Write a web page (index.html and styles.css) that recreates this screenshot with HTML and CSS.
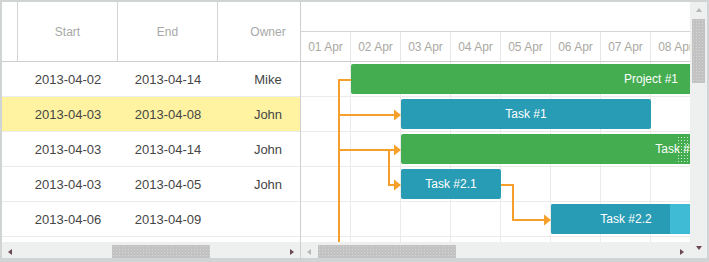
FILE: index.html
```html
<!DOCTYPE html>
<html lang="en">
  <head>
    <meta charset="UTF-8" />
    <title>Gantt</title>
    <link rel="stylesheet" href="styles.css">
  </head>
  <body>
    <div class="gantt">
      <div class="grid">
        <div class="grid-view">
          <div class="grid-head">
            <div class="cell cell-handle"></div>
            <div class="cell">Start</div>
            <div class="cell">End</div>
            <div class="cell cell-last">Owner</div>
          </div>
          <div class="grid-row">
            <div class="cell cell-handle"></div>
            <div class="cell">2013-04-02</div>
            <div class="cell">2013-04-14</div>
            <div class="cell cell-last">Mike</div>
          </div>
          <div class="grid-row selected">
            <div class="cell cell-handle"></div>
            <div class="cell">2013-04-03</div>
            <div class="cell">2013-04-08</div>
            <div class="cell cell-last">John</div>
          </div>
          <div class="grid-row">
            <div class="cell cell-handle"></div>
            <div class="cell">2013-04-03</div>
            <div class="cell">2013-04-14</div>
            <div class="cell cell-last">John</div>
          </div>
          <div class="grid-row">
            <div class="cell cell-handle"></div>
            <div class="cell">2013-04-03</div>
            <div class="cell">2013-04-05</div>
            <div class="cell cell-last">John</div>
          </div>
          <div class="grid-row">
            <div class="cell cell-handle"></div>
            <div class="cell">2013-04-06</div>
            <div class="cell">2013-04-09</div>
            <div class="cell cell-last"></div>
          </div>
        </div>
        <div class="hscroll">
          <span class="arrow arrow-left"></span>
          <div class="track"><div class="thumb grid-thumb"></div></div>
          <span class="arrow arrow-right"></span>
        </div>
      </div>

      <div class="chart">
        <div class="chart-view">
          <div class="scale-top"></div>
          <div class="scale-days">
            <div class="day">01 Apr</div>
            <div class="day">02 Apr</div>
            <div class="day">03 Apr</div>
            <div class="day">04 Apr</div>
            <div class="day">05 Apr</div>
            <div class="day">06 Apr</div>
            <div class="day">07 Apr</div>
            <div class="day">08 Apr</div>
          </div>
          <div class="chart-body">
            <div class="chart-row"></div>
            <div class="chart-row"></div>
            <div class="chart-row"></div>
            <div class="chart-row"></div>
            <div class="chart-row"></div>

            <!-- links -->
            <svg class="links" width="389" height="180">
              <path d="M50,18 H38 V180" />
              <path d="M38,53 H94" />
              <polygon points="93,47.5 100,53 93,58.5" />
              <path d="M38,88 H94" />
              <polygon points="93,82.5 100,88 93,93.5" />
              <path d="M88,88 V123 H94" />
              <polygon points="93,117.5 100,123 93,128.5" />
              <path d="M200,123 H212 V158 H244" />
              <polygon points="243,152.5 250,158 243,163.5" />
            </svg>

            <div class="bar bar-project" style="left: 50px; width: 600px; top: 2px">Project #1</div>
            <div class="bar bar-task" style="left: 100px; width: 250px; top: 37px">Task #1</div>
            <div class="bar bar-project" style="left: 100px; width: 550px; top: 72px">
              Task #2
              <span class="drag-handle"></span>
            </div>
            <div class="bar bar-task" style="left: 100px; width: 100px; top: 107px">Task #2.1</div>
            <div class="bar bar-task bar-light" style="left: 250px; width: 150px; top: 142px">
              <span class="progress" style="width: 79%"></span>
              <span class="bar-text">Task #2.2</span>
            </div>
          </div>
        </div>
        <div class="hscroll">
          <span class="arrow arrow-left off"></span>
          <div class="track"><div class="thumb chart-thumb"></div></div>
          <span class="arrow arrow-right"></span>
        </div>
      </div>

      <div class="vscroll">
        <span class="arrow arrow-up off"></span>
        <div class="vtrack"><div class="thumb vthumb"></div></div>
        <span class="arrow arrow-down"></span>
      </div>
    </div>
  </body>
</html>
```

FILE: styles.css
```css
body {
  margin: 0;
  font-family: "Liberation Sans", Arial, sans-serif;
  background: #fff;
}

.gantt {
  display: flex;
  width: 709px;
  height: 262px;
  box-sizing: border-box;
  border: 2px solid #d0d4d4;
  background: #fff;
}

/* grid */
.grid {
  display: flex;
  flex-direction: column;
  width: 299px;
  border-right: 1px solid #cecece;
  box-sizing: border-box;
}

.grid-view {
  width: 298px;
  height: 240px;
  overflow: hidden;
}

.grid-head,
.grid-row {
  display: flex;
  width: 316px;
  box-sizing: border-box;
}

.grid-head {
  height: 60px;
  border-bottom: 1px solid #cecece;
  color: #a8a8a8;
  font-size: 12px;
}

.grid-row {
  height: 35px;
  border-bottom: 1px solid #ebebeb;
  color: #454545;
  font-size: 13px;
}

.grid-row.selected {
  background: #fff3a1;
}

.cell {
  flex: none;
  width: 100px;
  display: flex;
  align-items: center;
  justify-content: center;
  box-sizing: border-box;
}

.cell-handle {
  width: 16px;
}

.grid-head .cell {
  border-right: 1px solid #d4d4d4;
}

.grid-head .cell-last {
  border-right: none;
}

/* chart */
.chart {
  display: flex;
  flex-direction: column;
  width: 389px;
}

.chart-view {
  width: 389px;
  height: 240px;
  overflow: hidden;
}

.scale-top {
  height: 30px;
  border-bottom: 1px solid #d4d4d4;
  box-sizing: border-box;
}

.scale-days {
  display: flex;
  height: 30px;
  border-bottom: 1px solid #cecece;
  box-sizing: border-box;
}

.day {
  flex: none;
  width: 50px;
  border-right: 1px solid #e6e6e6;
  box-sizing: border-box;
  display: flex;
  align-items: center;
  justify-content: center;
  font-size: 12px;
  color: #aaa9a2;
}

.chart-body {
  position: relative;
  height: 180px;
  background-image: linear-gradient(to right, transparent 49px, #ebebeb 49px);
  background-size: 50px 100%;
}

.chart-row {
  height: 35px;
  border-bottom: 1px solid #ebebeb;
  box-sizing: border-box;
}

.links {
  position: absolute;
  top: 0;
  left: 0;
  pointer-events: none;
}

.links path {
  fill: none;
  stroke: #f5a02b;
  stroke-width: 2;
}

.links polygon {
  fill: #f5a02b;
}

.bar {
  position: absolute;
  height: 30px;
  line-height: 30px;
  border-radius: 2px;
  text-align: center;
  color: #fff;
  font-size: 12px;
  overflow: hidden;
}

.bar-project {
  background: #44ad50;
}

.bar-task {
  background: #299cb5;
}

.bar-light {
  background: #3fbbd6;
}

.progress {
  position: absolute;
  top: 0;
  left: 0;
  bottom: 0;
  background: #299cb5;
}

.bar-text {
  position: relative;
}

.drag-handle {
  position: absolute;
  left: 276px;
  top: 2px;
  width: 13px;
  height: 27px;
  background-image: radial-gradient(circle, rgba(255, 255, 255, 0.75) 0.7px, transparent 0.9px);
  background-size: 3px 3px;
}

/* scrollbars */
.hscroll {
  display: flex;
  align-items: flex-start;
  height: 18px;
  box-sizing: border-box;
  background: #eef0ef;
  border-bottom: 2px solid #d0d4d4;
  padding-top: 3px;
}

.track {
  flex: 1;
  height: 13px;
}

.thumb {
  height: 13px;
  background-color: #c2c2c2;
  background-image: radial-gradient(circle, #d6d6d6 0.6px, transparent 0.8px);
  background-size: 3px 3px;
}

.grid-thumb {
  margin-left: 94px;
  width: 98px;
}

.chart-thumb {
  margin-left: 1px;
  width: 138px;
}

.arrow {
  flex: none;
  width: 16px;
  height: 13px;
  display: flex;
  align-items: center;
  justify-content: center;
}

.arrow::before {
  content: "";
  border: 0 solid transparent;
}

.arrow-left::before {
  border-width: 3.5px 4px 3.5px 0;
  border-right-color: #6b4656;
}

.arrow-right::before {
  border-width: 3.5px 0 3.5px 4px;
  border-left-color: #6b4656;
}

.arrow-up::before {
  border-width: 0 3.5px 4px 3.5px;
  border-bottom-color: #6b4656;
}

.arrow-down::before {
  border-width: 4px 3.5px 0 3.5px;
  border-top-color: #6b4656;
}

.arrow-left.off::before {
  border-right-color: #b5b8b7;
}

.arrow-up.off::before {
  border-bottom-color: #b5b8b7;
}

.vscroll {
  display: flex;
  flex-direction: column;
  width: 17px;
  background: #eef0ef;
  border-bottom: 2px solid #d0d4d4;
}

.vscroll .arrow {
  width: 17px;
  height: 16px;
}

.vtrack {
  flex: 1;
  padding: 1px 0 0 2px;
}

.vthumb {
  width: 13px;
  height: 64px;
}

.arrow-down {
  margin-bottom: 2px;
}
```
